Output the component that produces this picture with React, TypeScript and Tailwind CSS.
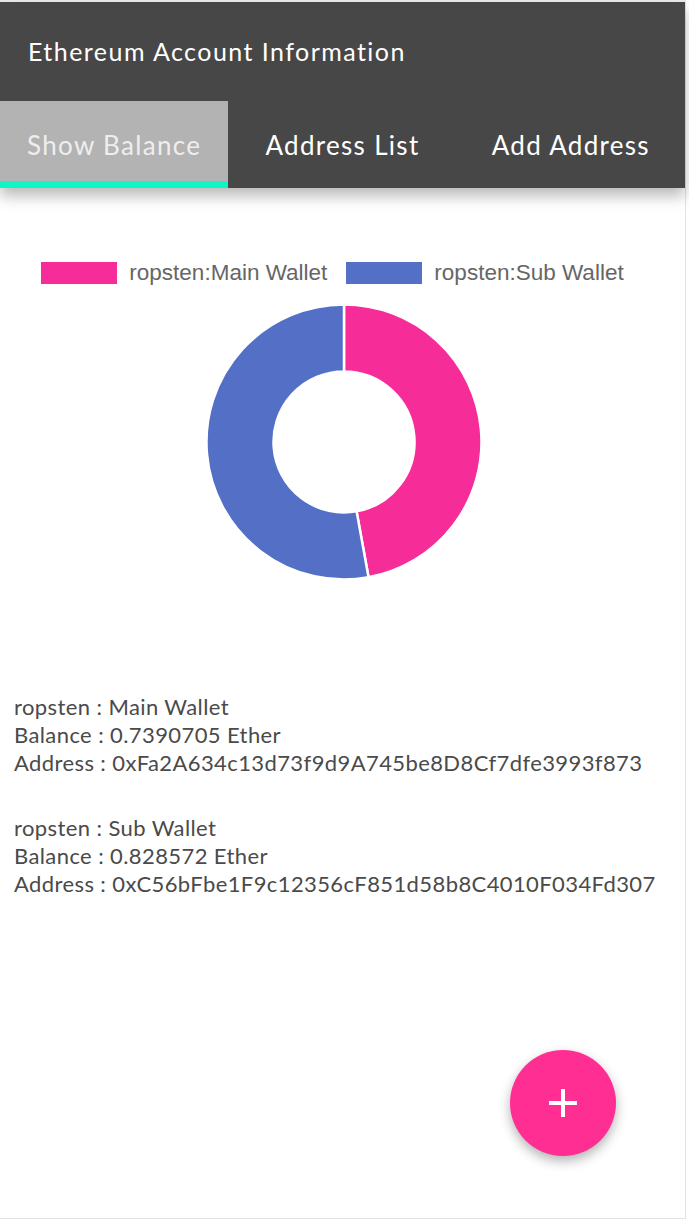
import React from "react";

const wallets = [
  {
    net: "ropsten",
    name: "Main Wallet",
    balance: 0.7390705,
    address: "0xFa2A634c13d73f9d9A745be8D8Cf7dfe3993f873",
    color: "#f62d98",
  },
  {
    net: "ropsten",
    name: "Sub Wallet",
    balance: 0.828572,
    address: "0xC56bFbe1F9c12356cF851d58b8C4010F034Fd307",
    color: "#536fc6",
  },
];

const pt = (c: number, r: number, a: number) =>
  `${(c + r * Math.cos(a)).toFixed(2)},${(c + r * Math.sin(a)).toFixed(2)}`;

const Donut = () => {
  const c = 138;
  const R = 137.5;
  const r = 70.5;
  const total = wallets.reduce((s, w) => s + w.balance, 0);
  let start = -Math.PI / 2;
  return (
    <svg width="276" height="276" viewBox="0 0 276 276">
      {wallets.map((w) => {
        const sweep = (w.balance / total) * Math.PI * 2;
        const end = start + sweep;
        const large = sweep > Math.PI ? 1 : 0;
        const d = `M${pt(c, R, start)} A${R},${R} 0 ${large} 1 ${pt(c, R, end)} L${pt(c, r, end)} A${r},${r} 0 ${large} 0 ${pt(c, r, start)} Z`;
        start = end;
        return <path key={w.name} d={d} fill={w.color} stroke="#fff" strokeWidth="2.5" />;
      })}
    </svg>
  );
};

const App = () => {
  const tabs = ["Show Balance", "Address List", "Add Address"];

  return (
    <div className="w-[689px] h-[1221px] bg-white relative overflow-hidden" style={{ fontFamily: "Lato, 'Open Sans', sans-serif" }}>
      <div className="w-[686px] h-[1219px] border-r border-b border-[#e2e2e2] border-t-2 border-t-[#ececec]">
        <header className="w-[685px] bg-[#474747] shadow-[0_8px_14px_rgba(0,0,0,0.28)] relative">
          <div className="h-[99px] flex items-center pl-[28px] text-white text-[25px] tracking-[1.45px]">
            Ethereum Account Information
          </div>
          <nav className="grid grid-cols-3 h-[87px]">
            {tabs.map((t, i) => (
              <div
                key={t}
                className={`relative flex items-center justify-center text-[26px] tracking-[1.3px] pt-[2px] ${
                  i === 0 ? "bg-[#b3b3b3] text-[#eeeeee]" : "text-white"
                }`}
              >
                {t}
                {i === 0 && <div className="absolute left-0 right-0 bottom-0 h-[7px] bg-[#0ff5c6]" />}
              </div>
            ))}
          </nav>
        </header>

        <section className="flex flex-col items-center pt-[68px]">
          <div className="flex items-center gap-[19px] mr-[20px] text-[22.5px] text-[#666]" style={{ fontFamily: "'Liberation Sans', Arial, sans-serif" }}>
            {wallets.map((w) => (
              <div key={w.name} className="flex items-center gap-[12px]">
                <span className="w-[76px] h-[22px]" style={{ background: w.color }} />
                <span>
                  {w.net}:{w.name}
                </span>
              </div>
            ))}
          </div>
          <div className="mt-[14px] ml-[2px]">
            <Donut />
          </div>
        </section>

        <section className="mt-[113px] pl-[14px] flex flex-col gap-[37px] text-[22px] leading-[28px] tracking-[0.4px] text-[#4a4a4a]">
          {wallets.map((w) => (
            <div key={w.name}>
              <div>
                {w.net} : {w.name}
              </div>
              <div>Balance : {w.balance} Ether</div>
              <div>Address : {w.address}</div>
            </div>
          ))}
        </section>
      </div>

      <button className="absolute left-[510px] top-[1050px] w-[106px] h-[106px] rounded-full bg-[#ff2e92] shadow-[0_5px_12px_rgba(0,0,0,0.3)] flex items-center justify-center">
        <svg width="34" height="34" viewBox="0 0 34 34">
          <path d="M17 3v28M3 17h28" stroke="#fff" strokeWidth="4" />
        </svg>
      </button>
    </div>
  );
};

export default App;
